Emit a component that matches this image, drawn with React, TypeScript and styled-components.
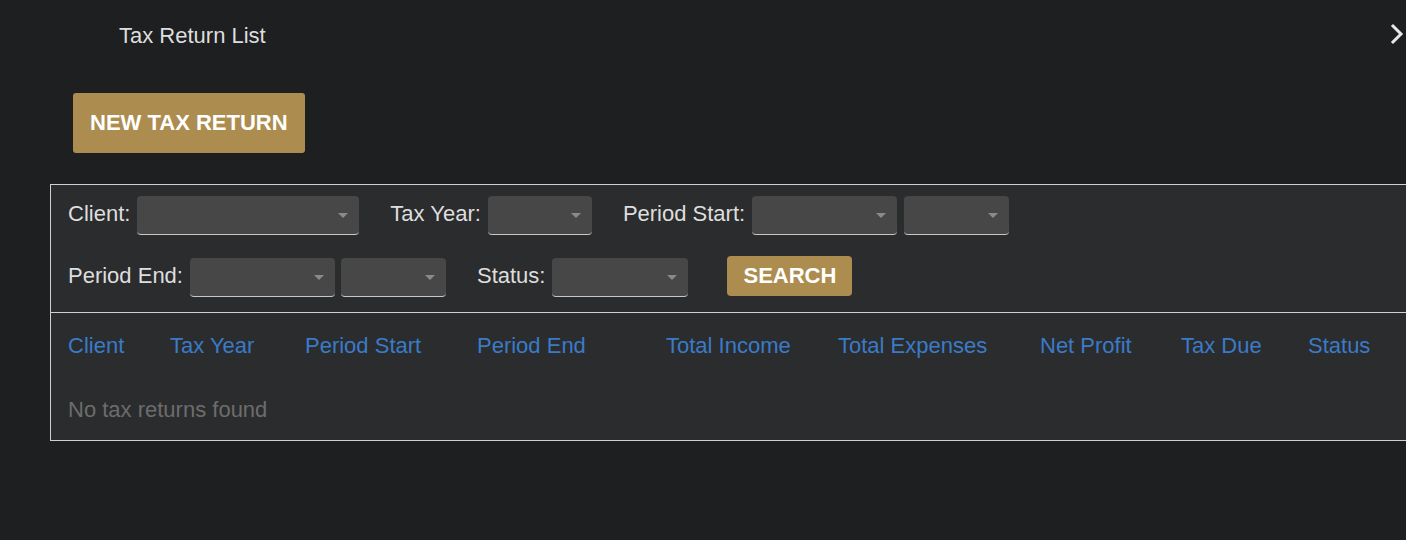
import React from "react";
import styled, { createGlobalStyle } from "styled-components";

const GlobalStyle = createGlobalStyle`
  html, body {
    margin: 0;
    padding: 0;
    background: #1e1f21;
    overflow: hidden;
  }
  body {
    font-family: "Liberation Sans", Arial, sans-serif;
    color: #dcdcdc;
  }
`;

const Page = styled.div`
  width: 1406px;
  height: 540px;
  background: #1e1f21;
`;

const TopBar = styled.div`
  height: 72px;
  display: flex;
  align-items: center;
  justify-content: space-between;
  padding: 0 2px 0 119px;
`;

const Title = styled.div`
  font-size: 22px;
  color: #dedede;
  padding-bottom: 1px;
`;

const Chevron = styled.svg`
  width: 14px;
  height: 22px;
  margin-bottom: 4px;
`;

const ActionRow = styled.div`
  padding: 21px 0 0 73px;
`;

const GoldButton = styled.button<{ $size?: "lg" | "sm" }>`
  background: #ad8c4f;
  color: #fff;
  border: none;
  border-radius: ${(p) => (p.$size === "sm" ? "4px" : "3px")};
  font-family: "Liberation Sans", Arial, sans-serif;
  font-weight: bold;
  font-size: 22px;
  text-transform: uppercase;
  height: ${(p) => (p.$size === "sm" ? "40px" : "60px")};
  padding: ${(p) => (p.$size === "sm" ? "0 16px" : "0 17px")};
  margin-bottom: ${(p) => (p.$size === "sm" ? "3px" : "0")};
  cursor: pointer;
  white-space: nowrap;
`;

const Panel = styled.div`
  margin: 31px 0 0 50px;
  width: 1400px;
  border: 1px solid #d0d0d0;
  background: #2b2c2e;
`;

const Filters = styled.div`
  padding: 11px 0 15px 17px;
  display: flex;
  flex-direction: column;
  gap: 23px;
  border-bottom: 1px solid #d0d0d0;
`;

const FilterRow = styled.div`
  display: flex;
  align-items: center;
  height: 39px;
`;

const Field = styled.div<{ $gapAfter?: number }>`
  display: flex;
  align-items: center;
  margin-right: ${(p) => p.$gapAfter ?? 31}px;
`;

const Label = styled.span`
  font-size: 22px;
  color: #dedede;
  margin-right: 7px;
  padding-bottom: 3px;
`;

const SelectWrap = styled.div<{ $w: number; $gapAfter?: number }>`
  position: relative;
  width: ${(p) => p.$w}px;
  height: 39px;
  margin-right: ${(p) => p.$gapAfter ?? 0}px;
`;

const SelectBox = styled.select`
  appearance: none;
  width: 100%;
  height: 100%;
  background: #474747;
  border: none;
  border-bottom: 1px solid #c8c8c8;
  border-radius: 4px;
  color: #ddd;
  font-size: 18px;
  outline: none;
`;

const Caret = styled.span`
  position: absolute;
  right: 11px;
  top: 17px;
  width: 0;
  height: 0;
  border-left: 5px solid transparent;
  border-right: 5px solid transparent;
  border-top: 5px solid #8a8a8a;
  pointer-events: none;
`;

const Table = styled.div`
  padding: 0 0 0 17px;
`;

const HeadRow = styled.div`
  display: grid;
  grid-template-columns: 102px 135px 172px 189px 172px 202px 141px 127px 1fr;
  height: 62px;
  align-items: center;
  padding-top: 2px;
`;

const HeadCell = styled.div`
  font-size: 22px;
  color: #3a7bc8;
  white-space: nowrap;
`;

const EmptyRow = styled.div`
  height: 61px;
  display: flex;
  align-items: center;
  font-size: 22px;
  color: #6c6c6c;
  padding-top: 2px;
`;

const Select = ({ w, gapAfter }: { w: number; gapAfter?: number }) => (
  <SelectWrap $w={w} $gapAfter={gapAfter}>
    <SelectBox defaultValue="">
      <option value=""></option>
    </SelectBox>
    <Caret />
  </SelectWrap>
);

const columns = [
  "Client",
  "Tax Year",
  "Period Start",
  "Period End",
  "Total Income",
  "Total Expenses",
  "Net Profit",
  "Tax Due",
  "Status",
];

export default function App() {
  return (
    <Page>
      <GlobalStyle />
      <TopBar>
        <Title>Tax Return List</Title>
        <Chevron viewBox="0 0 14 22">
          <path
            d="M3 3 L11 11 L3 19"
            fill="none"
            stroke="#e8e8e8"
            strokeWidth="3"
            strokeLinecap="square"
          />
        </Chevron>
      </TopBar>
      <ActionRow>
        <GoldButton>New Tax Return</GoldButton>
      </ActionRow>
      <Panel>
        <Filters>
          <FilterRow>
            <Field>
              <Label>Client:</Label>
              <Select w={222} />
            </Field>
            <Field>
              <Label>Tax Year:</Label>
              <Select w={104} />
            </Field>
            <Field>
              <Label>Period Start:</Label>
              <Select w={145} gapAfter={7} />
              <Select w={105} />
            </Field>
          </FilterRow>
          <FilterRow>
            <Field>
              <Label>Period End:</Label>
              <Select w={145} gapAfter={6} />
              <Select w={105} />
            </Field>
            <Field $gapAfter={39}>
              <Label>Status:</Label>
              <Select w={136} />
            </Field>
            <GoldButton $size="sm">Search</GoldButton>
          </FilterRow>
        </Filters>
        <Table>
          <HeadRow>
            {columns.map((c) => (
              <HeadCell key={c}>{c}</HeadCell>
            ))}
          </HeadRow>
          <EmptyRow>No tax returns found</EmptyRow>
        </Table>
      </Panel>
    </Page>
  );
}
